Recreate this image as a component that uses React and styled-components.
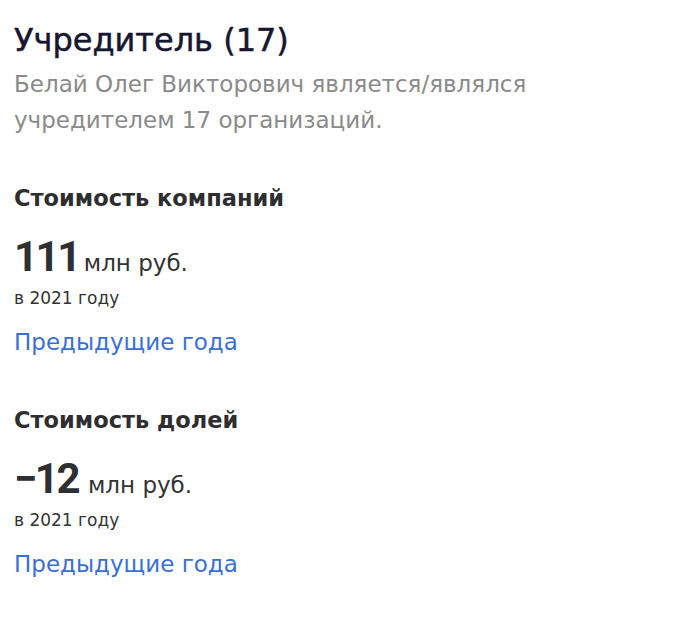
import React from "react";
import styled, { createGlobalStyle } from "styled-components";

const Global = createGlobalStyle`
  html, body { margin: 0; padding: 0; background: #fff; }
  body { font-family: "DejaVu Sans", Inter, sans-serif; -webkit-font-smoothing: antialiased; }
`;

const Page = styled.div`
  padding: 20px 14px 0 14px;
  display: flex;
  flex-direction: column;
`;

const Title = styled.h1`
  margin: 0;
  font-size: 32px;
  line-height: 40px;
  font-weight: 400;
  color: #16162e;
  -webkit-text-stroke: 0.5px #16162e;
`;

const Subtitle = styled.p`
  margin: 6px 0 0;
  font-size: 23px;
  line-height: 36px;
  font-weight: 400;
  color: #8a8a8a;
  max-width: 560px;
`;

const Section = styled.section`
  display: flex;
  flex-direction: column;
  margin-top: ${(p) => p.$top}px;
`;

const Heading = styled.h2`
  margin: 0;
  font-size: 22.5px;
  line-height: 30px;
  font-weight: 700;
  color: #2e2e30;
`;

const ValueRow = styled.div`
  display: flex;
  align-items: baseline;
  gap: ${(p) => p.$gap}px;
  margin-top: 19px;
  color: #2d2f33;
`;

const Number = styled.span`
  font-family: Roboto, Inter, sans-serif;
  font-size: 42px;
  line-height: 50px;
  font-weight: 700;
  letter-spacing: -2.5px;
`;

const Unit = styled.span`
  font-size: 23px;
  font-weight: 400;
  color: #333;
`;

const Year = styled.div`
  margin-top: 4px;
  font-size: 17px;
  line-height: 24px;
  color: #333;
`;

const Link = styled.a`
  margin-top: 17px;
  font-size: 23px;
  line-height: 30px;
  color: #3a6fd6;
  text-decoration: none;
  cursor: pointer;
`;

const Block = ({ title, value, top, gap }) => (
  <Section $top={top}>
    <Heading>{title}</Heading>
    <ValueRow $gap={gap}>
      <Number>{value}</Number>
      <Unit>млн руб.</Unit>
    </ValueRow>
    <Year>в 2021 году</Year>
    <Link>Предыдущие года</Link>
  </Section>
);

export default function App() {
  return (
    <>
      <Global />
      <Page>
        <Title>Учредитель (17)</Title>
        <Subtitle>
          Белай Олег Викторович является/являлся учредителем 17 организаций.
        </Subtitle>
        <Block title="Стоимость компаний" value="111" top={45} gap={5} />
        <Block title="Стоимость долей" value="−12" top={48} gap={10} />
      </Page>
    </>
  );
}
